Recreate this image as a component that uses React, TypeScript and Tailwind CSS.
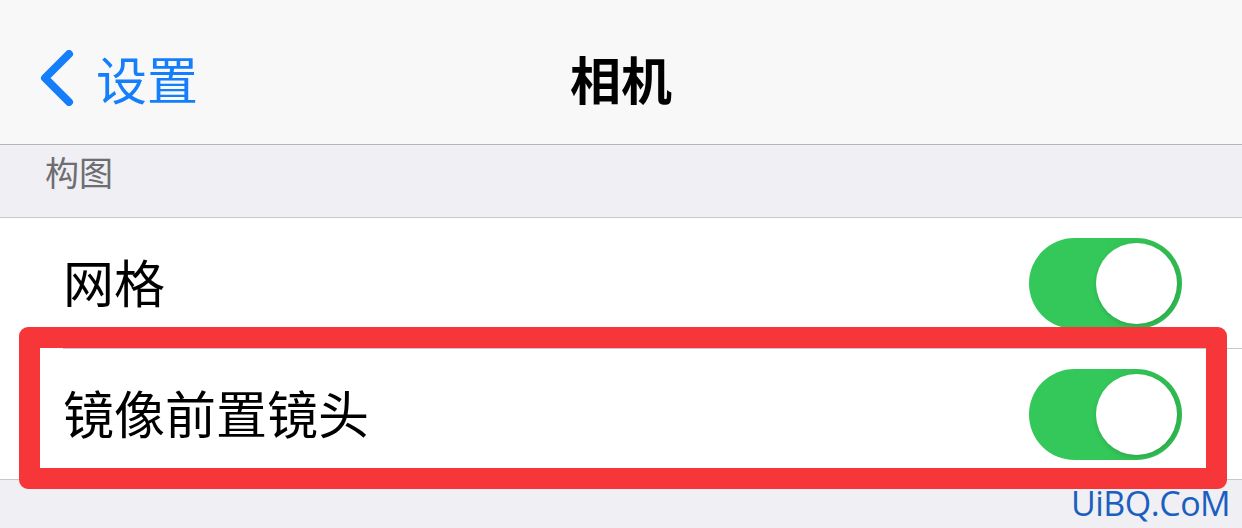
function Toggle() {
  return (
    <div className="relative h-[91px] w-[153px] rounded-full bg-gradient-to-r from-[#34c759] via-[#34c759] to-[#2fb94f]">
      <div className="absolute right-[5px] top-[5px] h-[81px] w-[81px] rounded-full bg-white shadow-[0_2px_4px_rgba(0,0,0,0.12)]" />
    </div>
  )
}

export default function App() {
  return (
    <div className="relative h-[528px] w-[1242px] overflow-hidden bg-[#efeff4] font-['Noto_Sans_CJK_SC','Noto_Sans',sans-serif]">
      <div className="relative flex h-[145px] items-center border-b border-[#b5b5b8] bg-[#f8f8f9] pt-[12px]">
        <div className="flex items-center pl-[38px] text-[#157efb]">
          <svg width="36" height="56" viewBox="0 0 36 56" fill="none">
            <polyline points="31,4 7,28 31,52" stroke="#157efb" strokeWidth="8" strokeLinecap="round" strokeLinejoin="round" />
          </svg>
          <span className="ml-[22px] text-[51px] leading-none">设置</span>
        </div>
        <div className="absolute inset-x-0 top-0 flex h-[144px] items-center justify-center pt-[12px] text-[51px] font-semibold leading-none text-black">
          相机
        </div>
      </div>

      <div className="h-[72px] pl-[45px] pt-[5px] text-[34px] leading-[44px] text-[#6d6d72]">构图</div>

      <div className="border-y border-[#c8c7cc] bg-white">
        <div className="flex h-[130px] items-center justify-between pl-[63px] pr-[60px]">
          <span className="-mt-[4px] text-[51px] leading-none text-black">网格</span>
          <Toggle />
        </div>
        <div className="ml-[63px] border-t border-[#c8c7cc]" />
        <div className="flex h-[130px] items-center justify-between pl-[63px] pr-[60px]">
          <span className="-mt-[4px] text-[51px] leading-none text-black">镜像前置镜头</span>
          <Toggle />
        </div>
      </div>

      <div className="absolute left-[19px] top-[327px] h-[162px] w-[1208px] rounded-[9px] border-[21px] border-[#f7363a]" />

      <div className="absolute left-[1071px] top-[486px] font-['Open_Sans',sans-serif] text-[34px] font-medium leading-none tracking-[-0.5px] text-[#1a5fc0]">
        UiBQ.CoM
      </div>
    </div>
  )
}
